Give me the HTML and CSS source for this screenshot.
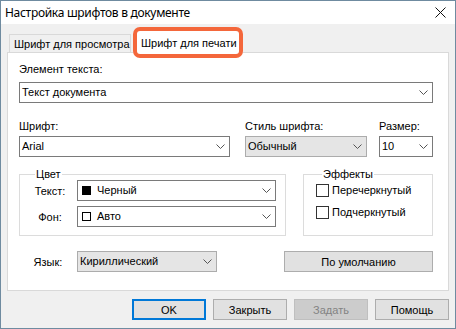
FILE: index.html
```html
<!DOCTYPE html>
<html lang="ru">
<head>
  <meta charset="UTF-8">
  <title>Настройка шрифтов в документе</title>
  <link rel="stylesheet" href="styles.css">
</head>
<body>

  <div class="window">
    <!-- Title bar -->
    <div class="titlebar">
      <span class="title">Настройка шрифтов в документе</span>
      <svg class="close" width="11" height="11" viewBox="0 0 11 11">
        <path d="M0.5 0.5 L10.5 10.5 M10.5 0.5 L0.5 10.5" stroke="#111" stroke-width="1" fill="none"/>
      </svg>
    </div>

    <div class="dialog">
      <!-- Tabs -->
      <div class="tabs">
        <div class="tab">Шрифт для просмотра</div>
        <div class="tab tab-active">Шрифт для печати</div>
      </div>

      <div class="panel">
        <label class="label">Элемент текста:</label>
        <div class="combo combo-main">
          <span>Текст документа</span>
          <svg class="chev" width="9" height="5" viewBox="0 0 9 5"><path d="M0.5 0.5 L4.5 4.5 L8.5 0.5" fill="none" stroke="#555"/></svg>
        </div>

        <div class="font-row">
          <div class="field">
            <label class="label label-tight">Шрифт:</label>
            <div class="combo combo-font">
              <span>Arial</span>
              <svg class="chev" width="9" height="5" viewBox="0 0 9 5"><path d="M0.5 0.5 L4.5 4.5 L8.5 0.5" fill="none" stroke="#555"/></svg>
            </div>
          </div>
          <div class="field">
            <label class="label label-tight">Стиль шрифта:</label>
            <div class="combo combo-gray combo-style">
              <span>Обычный</span>
              <svg class="chev" width="9" height="5" viewBox="0 0 9 5"><path d="M0.5 0.5 L4.5 4.5 L8.5 0.5" fill="none" stroke="#555"/></svg>
            </div>
          </div>
          <div class="field">
            <label class="label label-tight">Размер:</label>
            <div class="combo combo-size">
              <span>10</span>
              <svg class="chev" width="9" height="5" viewBox="0 0 9 5"><path d="M0.5 0.5 L4.5 4.5 L8.5 0.5" fill="none" stroke="#555"/></svg>
            </div>
          </div>
        </div>

        <div class="group-row">
          <fieldset class="group group-color">
            <legend>Цвет</legend>
            <div class="color-line">
              <span class="side-label">Текст:</span>
              <div class="combo combo-color">
                <span class="swatch swatch-black"></span>
                <span>Черный</span>
                <svg class="chev" width="9" height="5" viewBox="0 0 9 5"><path d="M0.5 0.5 L4.5 4.5 L8.5 0.5" fill="none" stroke="#555"/></svg>
              </div>
            </div>
            <div class="color-line">
              <span class="side-label">Фон:</span>
              <div class="combo combo-color">
                <span class="swatch"></span>
                <span>Авто</span>
                <svg class="chev" width="9" height="5" viewBox="0 0 9 5"><path d="M0.5 0.5 L4.5 4.5 L8.5 0.5" fill="none" stroke="#555"/></svg>
              </div>
            </div>
          </fieldset>

          <fieldset class="group group-effects">
            <legend>Эффекты</legend>
            <div class="check"><span class="box"></span>Перечеркнутый</div>
            <div class="check"><span class="box"></span>Подчеркнутый</div>
          </fieldset>
        </div>

        <div class="lang-row">
          <span class="side-label">Язык:</span>
          <div class="combo combo-gray combo-lang">
            <span>Кириллический</span>
            <svg class="chev" width="9" height="5" viewBox="0 0 9 5"><path d="M0.5 0.5 L4.5 4.5 L8.5 0.5" fill="none" stroke="#555"/></svg>
          </div>
          <div class="button button-default">По умолчанию</div>
        </div>
      </div>

      <!-- Dialog buttons -->
      <div class="buttons">
        <div class="button button-ok">OK</div>
        <div class="button">Закрыть</div>
        <div class="button button-disabled">Задать</div>
        <div class="button">Помощь</div>
      </div>
    </div>
  </div>

</body>
</html>
```

FILE: styles.css
```css
/* General styling */
body {
  margin: 0;
  font-family: "Liberation Sans", Arial, sans-serif;
  font-size: 11px;
  color: #000;
  background: #f0f0f0;
}

.window {
  width: 456px;
  height: 329px;
  box-sizing: border-box;
  border: 1px solid #6f8ba0;
  display: flex;
  flex-direction: column;
  background: #f0f0f0;
}

/* Title bar */
.titlebar {
  height: 23px;
  background: #fff;
  display: flex;
  align-items: center;
  padding: 0 9px 0 4px;
}

.title {
  font-family: "Noto Sans", sans-serif;
  font-size: 12px;
  letter-spacing: -0.3px;
  flex: 1;
}

.close {
  display: block;
}

/* Dialog body */
.dialog {
  flex: 1;
  padding: 0 6px 0 6px;
  display: flex;
  flex-direction: column;
}

/* Tabs */
.tabs {
  display: flex;
  align-items: flex-end;
  height: 28px;
  padding-left: 2px;
  position: relative;
  z-index: 1;
}

.tab {
  height: 18px;
  width: 122px;
  box-sizing: border-box;
  border: 1px solid #d9d9d9;
  border-bottom: none;
  padding: 3px 0 0 4px;
  line-height: 13px;
  margin-bottom: 0;
}

.tab-active {
  width: 102px;
  height: 23px;
  margin-left: 6px;
  margin-bottom: -2px;
  background: #fff;
  border: none;
  border-radius: 3px;
  padding: 6px 0 0 4px;
  box-shadow: 0 0 0 4px #f4673b;
}

.panel {
  width: 442px;
  height: 239px;
  box-sizing: border-box;
  background: #fff;
  border: 1px solid #d9d9d9;
  padding: 10px 15px 0 11px;
  display: flex;
  flex-direction: column;
}

.label {
  display: block;
  line-height: 13px;
  margin-bottom: 6px;
}

.label-tight {
  margin-bottom: 3px;
}

/* Combobox */
.combo {
  height: 21px;
  box-sizing: border-box;
  border: 1px solid #7a7a7a;
  background: #fff;
  display: flex;
  align-items: center;
  padding: 0 4px 0 2px;
  line-height: 13px;
}

.combo .chev {
  margin-left: auto;
}

.combo-gray {
  background: #e5e5e5;
  border-color: #acacac;
}

.combo-main {
  width: 414px;
}

.font-row {
  display: flex;
  margin-top: 17px;
}

.combo-font {
  width: 211px;
  margin-right: 15px;
}

.combo-style {
  width: 122px;
  margin-right: 12px;
}

.combo-size {
  width: 54px;
}

/* Group boxes */
.group-row {
  display: flex;
  margin-top: 11px;
}

.group {
  margin: 0;
  padding: 0;
  border: 1px solid #dcdcdc;
  box-sizing: border-box;
  height: 68px;
}

.group legend {
  line-height: 12px;
  padding: 0 1px;
}

.group-color {
  width: 267px;
  padding: 0 9px 0 8px;
}

.group-color legend {
  margin-left: 7px;
}

.color-line {
  display: flex;
  align-items: center;
  margin-bottom: 5px;
}

.side-label {
  width: 44px;
  text-align: center;
  margin-right: 5px;
}

.combo-color {
  width: 199px;
  padding-left: 4px;
}

.swatch {
  width: 9px;
  height: 9px;
  box-sizing: border-box;
  border: 1px solid #000;
  margin-right: 6px;
}

.swatch-black {
  background: #000;
}

.group-effects {
  width: 131px;
  margin-left: 17px;
  padding: 4px 0 0 12px;
}

.group-effects legend {
  margin-left: 6px;
}

.check {
  display: flex;
  align-items: center;
  margin-bottom: 9px;
  line-height: 13px;
}

.box {
  width: 13px;
  height: 13px;
  box-sizing: border-box;
  border: 1px solid #333;
  margin-right: 3px;
}

/* Language row */
.lang-row {
  display: flex;
  align-items: center;
  margin-top: 15px;
}

.lang-row .side-label {
  margin-left: 7px;
  margin-right: 7px;
}

.combo-lang {
  width: 140px;
}

/* Buttons */
.button {
  height: 21px;
  width: 74px;
  box-sizing: border-box;
  border: 1px solid #adadad;
  background: #e1e1e1;
  display: flex;
  align-items: center;
  justify-content: center;
}

.button-default {
  width: 149px;
  margin-left: auto;
}

.button-ok {
  border: 2px solid #0078d7;
}

.button-disabled {
  background: #cccccc;
  border-color: #bfbfbf;
  color: #838383;
}

.buttons {
  display: flex;
  justify-content: flex-end;
  gap: 7px;
  margin-top: 8px;
}
```
